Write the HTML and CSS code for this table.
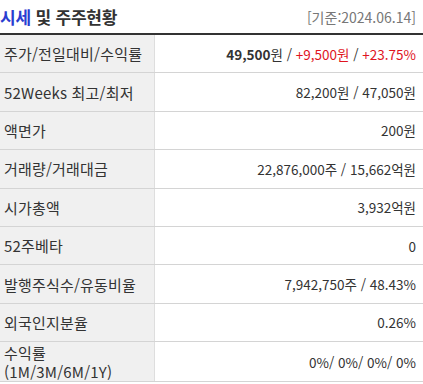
FILE: index.html
```html
<!DOCTYPE html>
<html lang="ko">
<head>
<meta charset="utf-8">
<title>시세 및 주주현황</title>
<link rel="stylesheet" href="styles.css">
</head>
<body>
<div class="box">
  <div class="head">
    <h2 class="title"><span class="blue">시세</span> 및 주주현황</h2>
    <span class="date">[기준:2024.06.14]</span>
  </div>
  <table class="tbl">
    <tbody>
      <tr><th>주가/전일대비/수익률</th><td><b>49,500</b>원 / <span class="red">+9,500원</span> / <span class="red">+23.75%</span></td></tr>
      <tr><th>52Weeks 최고/최저</th><td>82,200원 / 47,050원</td></tr>
      <tr><th>액면가</th><td>200원</td></tr>
      <tr><th>거래량/거래대금</th><td>22,876,000주 / 15,662억원</td></tr>
      <tr><th>시가총액</th><td>3,932억원</td></tr>
      <tr><th>52주베타</th><td>0</td></tr>
      <tr><th>발행주식수/유동비율</th><td>7,942,750주 / 48.43%</td></tr>
      <tr><th>외국인지분율</th><td>0.26%</td></tr>
      <tr class="last"><th>수익률<br>(1M/3M/6M/1Y)</th><td>0%/ 0%/ 0%/ 0%</td></tr>
    </tbody>
  </table>
</div>
</body>
</html>
```
FILE: styles.css
```css
html, body {
  margin: 0;
  padding: 0;
  background: #fff;
}
body {
  font-family: "Noto Sans CJK KR", sans-serif;
  color: #333;
}
.box {
  width: 423px;
}
.head {
  display: flex;
  align-items: center;
  justify-content: space-between;
  height: 33px;
  border-bottom: 2px solid #333;
  padding: 0 7px 0 0;
  box-sizing: content-box;
}
.title {
  margin: 0;
  font-size: 17px;
  font-weight: bold;
  color: #333;
  letter-spacing: -0.2px;
}
.blue {
  color: #2a3dd0;
}
.date {
  font-size: 14px;
  color: #777;
}
.tbl {
  width: 100%;
  border-collapse: collapse;
  font-size: 13.5px;
}
.tbl th, .tbl td {
  height: 37.4px;
  padding: 0;
  border-bottom: 1px solid #d4d4d4;
  vertical-align: middle;
}
.tbl th {
  width: 150px;
  background: #f0f0f0;
  border-right: 1px solid #dedede;
  text-align: left;
  font-weight: normal;
  font-size: 15px;
  padding-left: 4px;
  color: #333;
  line-height: 19px;
  letter-spacing: 0.2px;
}
.tbl td {
  text-align: right;
  padding-right: 7px;
  color: #333;
}
.tbl b {
  font-weight: bold;
}
.red {
  color: #e0141e;
}
.tbl .last th {
  padding-top: 1px;
}
```
